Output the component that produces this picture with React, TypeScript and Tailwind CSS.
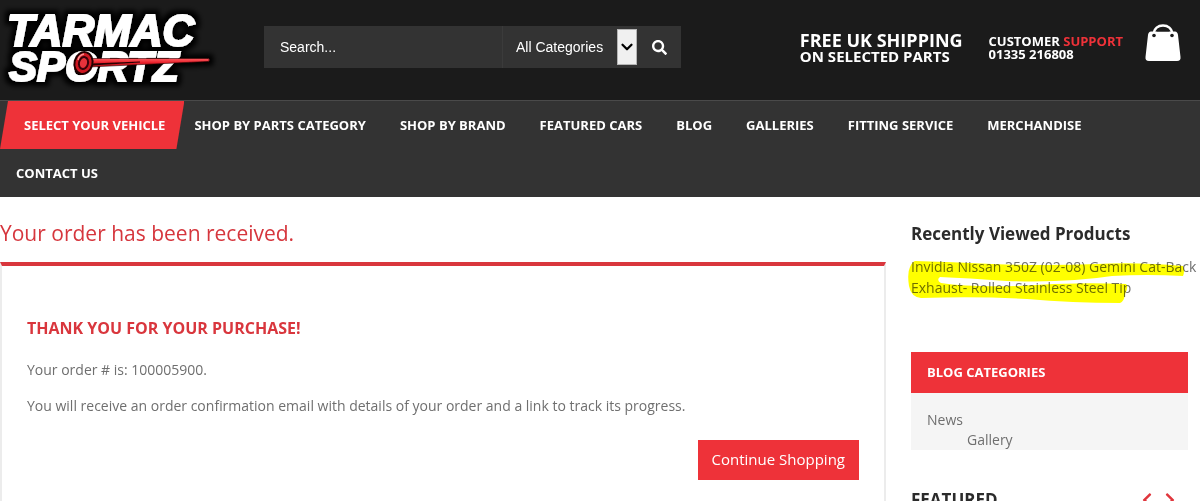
import { ChevronDown } from "lucide-react";
import { FaChevronLeft, FaChevronRight, FaSearch } from "react-icons/fa";

const navItems = [
  "Shop by parts category",
  "Shop by brand",
  "Featured cars",
  "Blog",
  "Galleries",
  "Fitting service",
  "Merchandise",
  "Contact us",
];

function Logo() {
  return (
    <svg viewBox="0 0 220 92" className="h-[92px] w-[220px]" role="img" aria-label="Tarmac Sportz">
      <defs>
        <filter id="logo-glow" x="-10%" y="-20%" width="120%" height="140%">
          <feMorphology in="SourceAlpha" operator="dilate" radius="4" result="fat" />
          <feGaussianBlur in="fat" stdDeviation="2.5" result="glow" />
          <feMerge>
            <feMergeNode in="glow" />
            <feMergeNode in="SourceGraphic" />
          </feMerge>
        </filter>
        <linearGradient id="needle" x1="0" y1="0" x2="0" y2="1">
          <stop offset="0" stopColor="#ff5a5f" />
          <stop offset="0.5" stopColor="#e8202a" />
          <stop offset="1" stopColor="#b01017" />
        </linearGradient>
      </defs>
      <g filter="url(#logo-glow)">
        <g fill="#fff" stroke="#fff" strokeWidth="2" strokeLinejoin="miter" fontFamily="Liberation Sans, sans-serif" fontWeight="700" fontStyle="italic">
          <text x="7" y="46" fontSize="44">
            TARMAC
          </text>
          <text x="9" y="81" fontSize="42">
            SPORTZ
          </text>
        </g>
        <path d="M88 58.500 L208 58.500 Q211 60 208 61.500 L88 67 Z" fill="url(#needle)" stroke="#240204" strokeWidth="0.600" />
        <path d="M92 63.500 L140 61.500 L140 62.500 L92 65.500 Z" fill="#2a0305" />
        <ellipse cx="83.500" cy="63" rx="9" ry="11" transform="rotate(15 83.500 63)" fill="#cf1820" stroke="#240204" strokeWidth="2" />
        <ellipse cx="83.500" cy="63" rx="4.500" ry="6" transform="rotate(15 83.500 63)" fill="#e8323a" stroke="#3d0507" strokeWidth="2" />
        <path d="M78 60 Q79 55 84 54" fill="none" stroke="#ff8d90" strokeWidth="1.500" />
      </g>
    </svg>
  );
}

function BagIcon() {
  return (
    <svg viewBox="0 0 36 39" className="h-[39px] w-9" aria-hidden="true">
      <path d="M9 12 V9.500 C9 4.500 13 1.500 18 1.500 S27 4.500 27 9.500 V12" fill="none" stroke="#fff" strokeWidth="2.500" />
      <path d="M6 7.500 H30 Q32.500 7.500 33 11 L35.500 33 Q36 37 32 37 H4 Q0 37 0.500 33 L3 11 Q3.500 7.500 6 7.500 Z" fill="#fff" />
      <path d="M11.500 7.500 C13 4.500 15 3.500 18 3.500 S23 4.500 24.500 7.500 Z" fill="#1b1b1b" />
      <circle cx="9" cy="11.500" r="1.800" fill="#1b1b1b" />
      <circle cx="27" cy="11.500" r="1.800" fill="#1b1b1b" />
    </svg>
  );
}

function SearchBar() {
  return (
    <form
      className="flex h-[42px] w-[417px] items-center bg-[#333] font-['Liberation_Sans',sans-serif] text-sm font-normal text-white"
      onSubmit={(e) => e.preventDefault()}
    >
      <input
        type="text"
        aria-label="Search"
        placeholder="Search..."
        className="h-full min-w-0 flex-1 border-r border-[#3b3b3b] bg-transparent px-4 text-white outline-none placeholder:text-white"
      />
      <div className="relative h-9 w-[134px]">
        <select aria-label="Category" className="h-full w-full appearance-none bg-transparent pl-[13px] text-sm text-white outline-none">
          <option>All Categories</option>
        </select>
        <span className="pointer-events-none absolute inset-y-0 right-0 flex w-5 items-center justify-center border border-[#b5b5b5] bg-[#f0f0f0] text-black">
          <ChevronDown size={18} strokeWidth={3} className="shrink-0" />
        </span>
      </div>
      <button type="submit" aria-label="Search" className="flex h-full w-11 items-center justify-center">
        <FaSearch size={15} />
      </button>
    </form>
  );
}

function Header() {
  return (
    <header className="flex h-[100px] items-start bg-[#1b1b1b] pr-[19px] font-bold text-white">
      <a href="#" className="mr-11 shrink-0">
        <Logo />
      </a>
      <div className="shrink-0 pt-[26px]">
        <SearchBar />
      </div>
      <div className="ml-auto flex shrink-0">
        <p className="mr-[26px] pt-8 text-[18px] leading-4">
          FREE UK SHIPPING
          <span className="block text-[15px] leading-4">ON SELECTED PARTS</span>
        </p>
        <p className="mr-[22px] pt-[35px] text-[13px] leading-[13px]">
          CUSTOMER <span className="text-[#ee3239]">SUPPORT</span>
          <span className="block">01335 216808</span>
        </p>
        <a href="#" aria-label="Shopping bag" className="pt-6">
          <BagIcon />
        </a>
      </div>
    </header>
  );
}

function Nav() {
  return (
    <nav className="border-t border-[#4a4a4a] bg-[#333] text-[13px] font-bold uppercase text-white">
      <ul className="flex flex-wrap">
        <li className="-mr-[6px]">
          <a href="#" className="flex h-12 items-center bg-[#ee3239] pr-[19px] pl-6 [clip-path:polygon(8px_0,100%_0,calc(100%-8px)_100%,0_100%)]">
            Select your vehicle
          </a>
        </li>
        {navItems.map((item) => (
          <li key={item}>
            <a href="#" className="flex h-12 items-center pr-[18px] pl-4">
              {item}
            </a>
          </li>
        ))}
      </ul>
    </nav>
  );
}

function OrderReceived() {
  return (
    <main className="flex min-w-0 flex-1 flex-col">
      <h1 className="pt-5 pb-[13px] text-[21px] leading-8 text-[#d6363d]">Your order has been received.</h1>
      <section className="flex-1 border-x-2 border-t-4 border-x-[#ececec] border-t-[#d9363d] px-[25px] pt-[50px]">
        <h2 className="text-base leading-6 font-bold text-[#d9363d]">THANK YOU FOR YOUR PURCHASE!</h2>
        <p className="mt-[18px] leading-6">Your order # is: 100005900.</p>
        <p className="mt-3 leading-6">You will receive an order confirmation email with details of your order and a link to track its progress.</p>
        <div className="mt-[22px] flex justify-end">
          <button type="button" className="h-10 bg-[#ee3239] px-[14px] text-[15px] text-white">
            Continue Shopping
          </button>
        </div>
      </section>
    </main>
  );
}

function Sidebar() {
  return (
    <aside className="w-[277px] shrink-0">
      <h2 className="pt-[25px] text-[17px] leading-6 font-bold text-[#2b2b2b]">Recently Viewed Products</h2>
      <div className="relative -mr-3 mt-[10px]">
        <a href="#" className="block leading-[21px]">
          Invidia Nissan 350Z (02-08) Gemini Cat-Back Exhaust- Rolled Stainless Steel Tip
        </a>
        <svg viewBox="0 0 280 50" className="pointer-events-none absolute top-0 -left-1 h-[50px] w-[280px] mix-blend-multiply" aria-hidden="true">
          <path
            d="M8 5 Q45 6 85 8 Q140 10 190 8 Q230 6 276 10 Q278 15 276 20 Q240 18 205 20 Q160 27 100 25 Q60 22 33 21 Q29 24 34 27 Q60 31 110 30 Q165 26 219 28 Q222 30 218 38 Q217 46 213 47 Q165 47 120 43 Q70 40 14 42 Q4 41 2 30 Q0 17 3 11 Q5 6 8 5 Z"
            fill="#ffff00"
          />
        </svg>
      </div>

      <section className="mt-[54px]">
        <h2 className="bg-[#ee3239] px-4 text-[13px] leading-[41px] font-bold text-white">BLOG CATEGORIES</h2>
        <ul className="bg-[#f5f5f5] px-4 pt-[17px] leading-5">
          <li>
            <a href="#">News</a>
            <ul className="pl-10">
              <li>
                <a href="#">Gallery</a>
              </li>
            </ul>
          </li>
        </ul>
      </section>

      <section className="mt-[38px] flex items-center justify-between">
        <h2 className="text-[17px] leading-6 font-bold text-[#2b2b2b]">FEATURED</h2>
        <div className="flex gap-[7px] pr-[10px] text-[#e0363d]">
          <button type="button" aria-label="Previous">
            <FaChevronLeft size={16} />
          </button>
          <button type="button" aria-label="Next">
            <FaChevronRight size={16} />
          </button>
        </div>
      </section>
    </aside>
  );
}

export default function App() {
  return (
    <div className="flex h-screen flex-col overflow-hidden bg-white font-['Open_Sans',sans-serif] text-sm text-[#6f6f6f]">
      <Header />
      <Nav />
      <div className="flex min-h-0 flex-1 gap-[25px] pr-3">
        <OrderReceived />
        <Sidebar />
      </div>
    </div>
  );
}
